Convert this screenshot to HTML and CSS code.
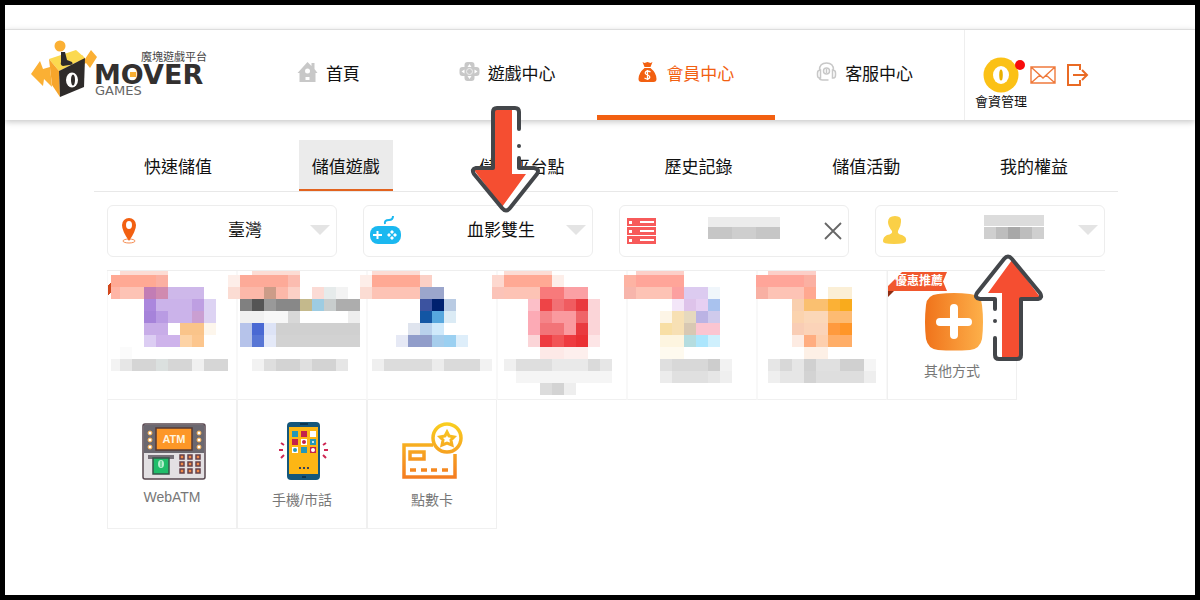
FILE: index.html
```html
<!DOCTYPE html>
<html lang="zh-Hant">
<head>
    <meta charset="UTF-8">
    <meta name="viewport" content="width=device-width, initial-scale=1.0">
    <title>魔塊遊戲平台</title>
    <link rel="stylesheet" href="styles.css">
</head>
<body>
    <header class="header">
        <a class="logo" href="#" aria-label="魔塊遊戲平台 MOVER GAMES">
            <svg width="180" height="60" viewBox="0 0 180 60">
                <path d="M0 34l9-13 3 8 7-2 2 20-8-8-1 7zM47 22l4-7 3 4 6-9 6 7-7 11-4-5-6 4z" fill="#fbb034"/>
                <path d="M18 19l27-9 9 8-26 13z" fill="#fbd94f"/>
                <path d="M18 19l10 12 1 26-8-12z" fill="#f7a52b"/>
                <path d="M28 31l26-13-1 29-24 10z" fill="#2e2b2a"/>
                <ellipse cx="41" cy="40" rx="6" ry="7.500" fill="#fff"/>
                <ellipse cx="42" cy="40" rx="2" ry="5.500" fill="#2e2b2a"/>
                <path d="M30 12h4l2 8 5 2q2 3-3 3l-6 1q-3-1-2-4z" fill="#2e2b2a"/>
                <circle cx="29" cy="6" r="5.500" fill="#fbb034"/>
                <text class="logo-cn" x="110" y="21">魔塊遊戲平台</text>
                <text class="logo-name" x="63" y="44">MOVER</text>
                <path d="M99 32h6v5h-6z" fill="#fbb034"/>
                <text class="logo-sub" x="64" y="55">GAMES</text>
            </svg>
        </a>
        <nav class="nav">
            <a class="nav-item" href="#">
                <svg class="nav-icon" viewBox="0 0 20 20"><path d="M0 11L10 0l4 4V1h3v6l3 4h-2v9H2v-9z" fill="#c8c8c8"/><circle cx="10" cy="9" r="2.500" fill="#fff"/><path d="M8 15h4v3H8z" fill="#fff"/></svg>
                首頁
            </a>
            <a class="nav-item" href="#">
                <svg class="nav-icon" viewBox="0 0 20 20"><path d="M8 0h4q3 0 3 3v2h2q3 0 3 3v3q0 3-3 3h-2v2q0 3-3 3H8q-3 0-3-3v-2H3q-3 0-3-3V8q0-3 3-3h2V3q0-3 3-3z" fill="#c8c8c8"/><path d="M10 2l2 3H8zM10 17l2-3H8zM2 9.500l3-2v4zM18 9.500l-3-2v4z" fill="#fff"/><circle cx="10" cy="9.500" r="3" fill="none" stroke="#eee"/></svg>
                遊戲中心
            </a>
            <a class="nav-item active" href="#">
                <svg class="nav-icon" viewBox="0 0 20 20"><path d="M5 0l2 1 3-1 3 1 2-1-2 5h-6zM7 6h6q6 5 6 11 0 3-3 3H4q-3 0-3-3Q1 11 7 6z" fill="#f26011"/><path d="M13 10q-3-2-5 0-1 2 2 3t2 3q-2 2-5 0M10 8v10" fill="none" stroke="#fff" stroke-width="1.300"/></svg>
                會員中心
            </a>
            <a class="nav-item" href="#">
                <svg class="nav-icon" viewBox="0 0 20 20" fill="none" stroke="#c8c8c8" stroke-width="1.500"><path d="M3 8q0-7 7-7t7 7M4 8v8H3q-2 0-2-3v-2q0-3 3-3zM16 8v8h1q2 0 2-3v-2q0-3-3-3zM3 16q0 2 3 2h6"/><circle cx="10" cy="9" r="3"/><path d="M10 7v4"/></svg>
                客服中心
            </a>
        </nav>
        <div class="user">
            <a class="account" href="#">
                <svg width="36" height="36" viewBox="0 0 36 36"><circle cx="18" cy="18" r="17.500" fill="#fbc116"/><ellipse cx="18" cy="18" rx="8" ry="9" fill="#fff"/><ellipse cx="18" cy="18" rx="1.800" ry="5.500" fill="#e9b000"/></svg>
                <span class="badge"></span>
                <span>會資管理</span>
            </a>
            <a class="user-link" href="#" aria-label="信箱"><svg width="26" height="18" viewBox="0 0 26 18" fill="none" stroke="#ef7a3c" stroke-width="1.400"><path d="M1 1h24v16H1zM1 1l12 11L25 1M1 17l9-8M25 17l-9-8"/></svg></a>
            <a class="user-link" href="#" aria-label="登出"><svg width="22" height="22" viewBox="0 0 22 22" fill="none" stroke="#e96a24" stroke-width="2"><path d="M13 6V1H1v20h12v-5M6 11h14M15 6l5 5-5 5"/></svg></a>
        </div>
    </header>

    <main class="main">
        <nav class="tabs">
            <a class="tab" href="#">快速儲值</a>
            <a class="tab active" href="#">儲值遊戲</a>
            <a class="tab" href="#">儲值平台點</a>
            <a class="tab" href="#">歷史記錄</a>
            <a class="tab" href="#">儲值活動</a>
            <a class="tab" href="#">我的權益</a>
        </nav>

        <div class="pickers">
            <div class="picker">
                <svg class="picker-icon" viewBox="0 0 32 32"><ellipse cx="15" cy="26" rx="6" ry="2" fill="none" stroke="#f58b4f"/><path d="M15 26Q8 16 8 10a7 7 0 0 1 14 0q0 6-7 16z" fill="#f26011"/><ellipse cx="15" cy="10" rx="3" ry="4" fill="#fff"/></svg>
                <select aria-label="地區"><option>臺灣</option></select>
                <span class="caret"></span>
            </div>
            <div class="picker">
                <svg class="picker-icon" viewBox="0 0 32 32"><rect x="0" y="11" width="31" height="18" rx="8" fill="#1bb8f0"/><path d="M15 9q-1-4 4-4 4 0 4-4" fill="none" stroke="#1bb8f0" stroke-width="2"/><path d="M3 20h9M7.500 16v8" stroke="#fff" stroke-width="2"/><path d="M22 15l2 2-2 2-2-2zM22 21l2 2-2 2-2-2zM19 18l2 2-2 2-2-2zM25 18l2 2-2 2-2-2z" fill="#fff"/></svg>
                <select aria-label="遊戲"><option>血影雙生</option></select>
                <span class="caret"></span>
                <svg class="arrow arrow-down" viewBox="0 0 71 107">
                    <path d="M27 2h18q4 0 4 4v56h15q6 1 3 6L40 102q-4 5-8 0L4 68q-3-5 2-6h17V6q0-4 4-4z" fill="#fff"/>
                    <path d="M23 3h19v65h14L32 101 4 64h19z" fill="#f54e31"/>
                    <path d="M49 23V6q0-4-4-4H27q-4 0-4 4v56H6q-5 1-2 6l28 34q4 5 8 0l27-34q3-5-3-6H49V52" fill="none" stroke="#43464a" stroke-width="4" stroke-linecap="round" stroke-linejoin="round"/>
                    <circle cx="49" cy="40" r="2" fill="#43464a"/>
                </svg>
            </div>
            <div class="picker">
                <svg class="picker-icon" viewBox="0 0 32 32"><path d="M1 3h29v8H1zM1 12h29v8H1zM1 21h29v8H1z" fill="#f75a5a"/><path d="M3 6h3v3H3zM3 15h3v3H3zM3 24h3v3H3zM14 6h14v2H14zM14 15h14v2H14zM14 24h14v2H14z" fill="#fff"/></svg>
                <select aria-label="伺服器"><option></option></select>
                <svg class="redacted server" viewBox="0 0 72 22" shape-rendering="crispEdges"><path d="M0 0h72v10H0z" fill="#ececec"/><path d="M0 10h72v12H0z" fill="#c6c6c6"/><path d="M24 10h24v12H24z" fill="#cecece"/></svg>
                <button class="clear" type="button" aria-label="清除"><svg width="18" height="18" viewBox="0 0 18 18"><path d="M1 1l16 16M17 1L1 17" stroke="#666" stroke-width="1.800"/></svg></button>
            </div>
            <div class="picker">
                <svg class="picker-icon" viewBox="0 0 32 32"><path d="M10 16Q6 11 6 7q0-6 7-6t6 6q0 4-3 9-1 3 4 4 5 2 4 6 0 3-12 3T1 26q0-4 4-6 6-1 5-4z" fill="#fad047"/></svg>
                <select aria-label="角色"><option></option></select>
                <svg class="redacted role" viewBox="0 0 60 24" shape-rendering="crispEdges"><path d="M0 0h60v11H0z" fill="#dcdcdc"/><path d="M0 12h60v12H0z" fill="#cfcfcf"/><path d="M12 12h12v12H12zM36 12h12v12H36z" fill="#bdbdbd"/><path d="M24 12h12v12H24z" fill="#a8a8a8"/></svg>
                <span class="caret"></span>
                <svg class="arrow arrow-up" viewBox="0 0 71 107">
                    <path d="M27 2h18q4 0 4 4v56h15q6 1 3 6L40 102q-4 5-8 0L4 68q-3-5 2-6h17V6q0-4 4-4z" fill="#fff"/>
                    <path d="M23 3h19v65h14L32 101 4 64h19z" fill="#f54e31"/>
                    <path d="M49 23V6q0-4-4-4H27q-4 0-4 4v56H6q-5 1-2 6l28 34q4 5 8 0l27-34q3-5-3-6H49V52" fill="none" stroke="#43464a" stroke-width="4" stroke-linecap="round" stroke-linejoin="round"/>
                    <circle cx="49" cy="40" r="2" fill="#43464a"/>
                </svg>
            </div>
        </div>

        <div class="cards">
            <div class="card hidden-card"></div>
            <div class="card hidden-card"></div>
            <div class="card hidden-card"></div>
            <div class="card hidden-card"></div>
            <div class="card hidden-card"></div>
            <div class="card hidden-card"></div>
            <a class="card" href="#">
                <span class="ribbon">優惠推薦</span>
                <svg class="card-icon" viewBox="0 0 68 60">
                    <defs><linearGradient id="plus" x2="1" y2="0"><stop stop-color="#f0731b"/><stop offset="1" stop-color="#fdb04a"/></linearGradient></defs>
                    <path d="M20 2q16-2 32 0 11 1 12 11 2 17 0 34-2 10-12 11-16 1-32 0Q10 57 8 47q-2-17 0-34Q9 3 20 2z" fill="url(#plus)"/>
                    <path d="M36 16v27M22 30h28" stroke="#fff" stroke-width="8" stroke-linecap="round"/>
                </svg>
                <span>其他方式</span>
            </a>
            <a class="card" href="#">
                <svg class="card-icon" viewBox="0 0 68 60">
                    <rect x="5" y="3" width="62" height="55" rx="2" fill="#e3e0e3" stroke="#57474f" stroke-width="1.500"/>
                    <path d="M6 4h60v28H6z" fill="#6b6870"/>
                    <path d="M18 7h36v22H18z" fill="#fd9727" stroke="#573a35" stroke-width="1.500"/>
                    <text class="atm" x="36" y="22" text-anchor="middle">ATM</text>
                    <g fill="#fff" stroke="#f4ac4b"><circle cx="12" cy="12" r="2"/><circle cx="12" cy="19" r="2"/><circle cx="12" cy="26" r="2"/><circle cx="61" cy="12" r="2"/><circle cx="61" cy="19" r="2"/><circle cx="61" cy="26" r="2"/></g>
                    <path d="M10 34h26v4H10z" fill="#777078"/>
                    <path d="M15 37h16v16H15z" fill="#20bd6a" stroke="#37534a" stroke-width="1.500"/>
                    <ellipse cx="23" cy="43" rx="3" ry="4" fill="#b9efd0"/><path d="M23 40v6" stroke="#20bd6a"/>
                    <g fill="#f08a4b" stroke="#65404a" stroke-width="1.500"><path d="M42 34h4v4h-4zM50 34h4v4h-4zM58 34h4v4h-4zM42 41h4v4h-4zM50 41h4v4h-4zM58 41h4v4h-4zM42 48h4v4h-4zM50 48h4v4h-4zM58 48h4v4h-4z"/></g>
                </svg>
                <span>WebATM</span>
            </a>
            <a class="card" href="#">
                <svg class="card-icon" viewBox="0 0 68 60">
                    <rect x="19" y="1" width="33" height="58" rx="4" fill="#15577b"/>
                    <path d="M21 6h29v47H21z" fill="#fdb614"/>
                    <path d="M32 3h8M34 56h4" stroke="#0b3550" stroke-width="2"/>
                    <path d="M24 10h6v6h-6zM42 18h6v6h-6zM33 26h6v6h-6z" fill="#2697b7"/>
                    <path d="M33 10h6v6h-6zM24 18h6v6h-6zM42 26h6v6h-6z" fill="#c4224b"/>
                    <path d="M42 10h6v6h-6zM33 18h6v6h-6zM24 26h6v6h-6z" fill="#fff"/>
                    <g><circle cx="36" cy="21" r="2" fill="#c4224b"/><circle cx="27" cy="29" r="2" fill="#2697b7"/><circle cx="45" cy="29" r="2" fill="#fff"/><circle cx="45" cy="21" r="1" fill="#fff"/></g>
                    <path d="M31 47h2M35 47h2M39 47h2" stroke="#39415a" stroke-width="2"/>
                    <path d="M13 22l3 2M11 29h4M13 37l3-3M58 22l-3 2M60 29h-4M58 37l-3-3" stroke="#cf2854" stroke-width="2"/>
                </svg>
                <span>手機/市話</span>
            </a>
            <a class="card" href="#">
                <svg class="card-icon" viewBox="0 0 68 60">
                    <defs><linearGradient id="gold" gradientUnits="userSpaceOnUse" x1="0" y1="2" x2="0" y2="58"><stop stop-color="#f9cf20"/><stop offset="1" stop-color="#f47b21"/></linearGradient></defs>
                    <g fill="none" stroke="url(#gold)" stroke-width="3.500">
                        <path d="M35 24H6v32h51V33M12 31h14v7H12z"/>
                        <path d="M12 49h6M23 49h6M33 49h6M44 49h6"/>
                        <circle cx="49" cy="17" r="14"/>
                        <path d="M49 11l2 4 5 1-3 3 1 5-5-2-5 2 1-5-3-3 5-1z" stroke-width="3"/>
                    </g>
                </svg>
                <span>點數卡</span>
            </a>
            <svg class="mosaic" width="780" height="136" viewBox="108 271 780 136" shape-rendering="crispEdges" aria-hidden="true">
                <path d="M108 285l4-4v10l-4 5z" fill="#d2481c"/>
            </svg>
        </div>
    </main>
    <script src="mosaic.js"></script>
</body>
</html>
```
FILE: styles.css
```css
* {
    box-sizing: border-box;
}

body {
    margin: 0;
    min-height: 100vh;
    padding-top: 24px;
    border: 5px solid #000;
    background-color: #fff;
    color: #111;
    font-family: "Liberation Sans", "Noto Sans CJK TC", sans-serif;
    font-size: 17px;
}

a {
    color: inherit;
    text-decoration: none;
}

.header {
    display: flex;
    height: 91px;
    border-top: 1px solid #ddd;
    box-shadow: 0 2px 6px rgba(0, 0, 0, 0.22);
}

.logo {
    flex: 0 0 234px;
    padding: 10px 0 0 26px;
}

.logo-cn {
    font-size: 11px;
    fill: #444;
}

.logo-name {
    font-family: "DejaVu Sans", sans-serif;
    font-size: 27px;
    font-weight: bold;
    fill: #33302f;
}

.logo-sub {
    font-family: "DejaVu Sans", sans-serif;
    font-size: 13px;
    fill: #666;
}

.nav {
    display: flex;
    flex: 1;
    margin-right: 10px;
}

.nav-item {
    display: flex;
    flex: 1;
    justify-content: center;
    align-items: center;
    gap: 8px;
    border-bottom: 5px solid transparent;
}

.nav-item.active {
    color: #f26011;
    border-bottom-color: #f26011;
}

.nav-icon {
    width: 21px;
    height: 20px;
    margin-bottom: 2px;
}

.user {
    display: flex;
    flex: 0 0 231px;
    gap: 11px;
    padding: 27px 0 0 10px;
    border-left: 1px solid #eee;
}

.account {
    position: relative;
    display: flex;
    flex-direction: column;
    align-items: center;
    width: 52px;
    margin-right: -8px;
    font-size: 13px;
    line-height: 18px;
}

.badge {
    position: absolute;
    top: 3px;
    right: 2px;
    width: 10px;
    height: 10px;
    border-radius: 50%;
    background-color: #f80b0b;
}

.user-link {
    display: flex;
    align-items: center;
    height: 36px;
}

.main {
    max-width: 1036px;
    margin: 0 auto;
    padding: 20px 0 0 12px;
}

.tabs {
    display: flex;
    justify-content: space-around;
    border-bottom: 1px solid #e8e8e8;
}

.tab {
    padding: 6px 13px 0;
    line-height: 43px;
    border-bottom: 2px solid transparent;
}

.tab.active {
    background-color: #ebebeb;
    border-bottom-color: #e2631f;
}

.pickers {
    display: grid;
    grid-template-columns: repeat(4, 1fr);
    gap: 26px;
    margin: 13px;
}

.picker {
    position: relative;
    display: flex;
    align-items: center;
    height: 52px;
    border: 1px solid #ededed;
    border-radius: 6px;
}

.picker-icon {
    width: 32px;
    height: 32px;
    margin: 0 6px;
}

.picker select {
    flex: 1;
    min-width: 0;
    height: 50px;
    padding: 0 0 2px 2px;
    border: 0;
    background: none;
    color: #111;
    font: inherit;
    text-align-last: center;
    appearance: none;
}

.caret {
    position: absolute;
    top: 19px;
    right: 6px;
    border: 10px solid transparent;
    border-top-color: #e4e4e4;
    border-bottom: 0;
    pointer-events: none;
}

.clear {
    position: absolute;
    top: 16px;
    right: 6px;
    padding: 0;
    border: 0;
    background: none;
    line-height: 0;
    cursor: pointer;
}

.redacted {
    position: absolute;
    pointer-events: none;
}

.server {
    top: 11px;
    left: 88px;
    width: 72px;
}

.role {
    top: 9px;
    left: 108px;
    width: 60px;
}

.arrow {
    position: absolute;
    z-index: 2;
    width: 71px;
    height: 107px;
    pointer-events: none;
}

.arrow-down {
    bottom: 43px;
    left: 106px;
}

.arrow-up {
    top: 48px;
    left: 97px;
    transform: rotate(180deg);
}

.cards {
    position: relative;
    display: flex;
    flex-wrap: wrap;
    margin: 0 13px;
    border-top: 1px solid #eee;
}

.card {
    position: relative;
    display: flex;
    flex-direction: column;
    align-items: center;
    width: 130px;
    height: 129px;
    padding-top: 21px;
    border: 1px solid #f0f0f0;
    border-top: 0;
    color: #777;
    font-size: 14px;
}

.hidden-card {
    border-color: #f8f8f8;
    border-bottom-color: #f0f0f0;
}

.card-icon {
    width: 68px;
    height: 60px;
    margin-bottom: 8px;
}

.ribbon {
    position: absolute;
    z-index: 1;
    top: 1px;
    left: 0;
    width: 59px;
    padding-left: 7px;
    color: #fff;
    font-size: 12px;
    font-weight: bold;
    line-height: 19px;
    white-space: nowrap;
}

.ribbon::before,
.ribbon::after {
    content: "";
    position: absolute;
    z-index: -1;
    left: 0;
}

.ribbon::before {
    top: 0;
    width: 59px;
    height: 19px;
    background-color: #f1572d;
    clip-path: polygon(14px 0, 100% 0, 55px 50%, 100% 100%, 0 100%, 0 14px);
}

.ribbon::after {
    top: 19px;
    border-top: 6px solid #8e2c12;
    border-right: 6px solid transparent;
}

.mosaic {
    position: absolute;
    top: 0;
    left: 1px;
    pointer-events: none;
}

.atm {
    font-size: 11px;
    font-weight: bold;
    fill: #fff3df;
}
```
FILE: mosaic.js
```js
// Each row: top edge, then [left, width in cells, color]
const CELL = 12;
const rows = [
    [271, [120, 4, "#fcdcd4"], [252, 4, "#fcdcd4"], [372, 4, "#fcdcd4"], [504, 4, "#fcdcd4"], [636, 4, "#fccfc8"], [768, 4, "#fccfc8"]],
    [275, [111, 4, "#ffa994"], [156, 1, "#fbb0a2"],
        [228, 1, "#fdeee9"], [240, 4, "#fdaa98"], [288, 1, "#fbbcb0"],
        [360, 1, "#fdeee9"], [372, 4, "#ffa994"], [420, 1, "#fbd0c6"],
        [492, 1, "#fdd8cf"], [504, 4, "#ffa994"], [552, 1, "#fdeee9"],
        [624, 1, "#fdb3a3"], [636, 4, "#ffa599"],
        [756, 4, "#ffa599"], [804, 1, "#fbb0a2"]],
    [287, [111, 1, "#ffb5a5"], [120, 2, "#fdc3b5"], [144, 1, "#c27db5"], [156, 1, "#d08ab0"], [168, 3, "#ceb8ea"],
        [228, 1, "#fbdcd3"], [240, 2, "#fcb8a9"], [264, 1, "#cc9c88"], [276, 1, "#fcb8a9"], [288, 1, "#fbd0c6"], [312, 1, "#fbdbd5"], [324, 1, "#e6ebeb"], [336, 1, "#f3f3f3"],
        [360, 1, "#fbdcd3"], [372, 4, "#fdc3b5"], [420, 2, "#9ba6cc"],
        [492, 1, "#fbc3b8"], [504, 3, "#fdc3b5"], [540, 2, "#f87a7b"], [564, 2, "#fba0a4"],
        [624, 1, "#f7b5ab"], [636, 3, "#fdc3b5"], [672, 1, "#fca0a0"], [684, 2, "#dccbf0"], [708, 1, "#f0f6fb"],
        [756, 1, "#f8b0a3"], [768, 3, "#fdc3b5"], [804, 1, "#ffa890"], [828, 2, "#fbefd6"]],
    [299, [144, 1, "#ab87dd"], [156, 3, "#cbb3ea"], [192, 1, "#be9fe2"], [204, 1, "#ddd3f3"],
        [240, 1, "#808080"], [252, 1, "#555555"], [264, 1, "#999999"], [276, 2, "#888888"], [300, 1, "#c4b98c"], [312, 1, "#9dcce2"], [324, 1, "#c8cdcd"], [336, 2, "#adadad"],
        [420, 1, "#3c53a0"], [432, 1, "#00216f"], [444, 1, "#b9cbe3"],
        [528, 1, "#fcbfc8"], [540, 1, "#ee4447"], [552, 1, "#f27074"], [564, 1, "#f05c60"], [576, 1, "#e93a3f"], [588, 1, "#fbd5d8"],
        [672, 1, "#f3e6f8"], [684, 1, "#dec3ea"], [696, 1, "#e6cff2"], [708, 1, "#a9c2ee"],
        [792, 1, "#f9cfae"], [804, 2, "#fac070"], [828, 1, "#fbb136"], [840, 1, "#f9ab1c"]],
    [311, [144, 1, "#a683da"], [156, 1, "#b99be3"], [168, 2, "#cbb3ea"], [192, 1, "#ca9fd2"], [204, 1, "#ddd3f3"],
        [240, 2, "#f0f0f0"], [264, 2, "#f7f7f7"], [288, 1, "#d8d8d8"], [348, 1, "#eeeeee"],
        [420, 1, "#1356a4"], [432, 1, "#57a7de"], [444, 1, "#dbebf5"],
        [528, 1, "#fcaab5"], [540, 1, "#f58488"], [552, 2, "#fa9a9f"], [576, 1, "#ef6468"], [588, 1, "#fbd5d8"],
        [660, 1, "#fdf5e6"], [672, 1, "#f7e0b4"], [684, 1, "#e6d9be"], [696, 1, "#bbb3e4"], [708, 1, "#cfcaec"],
        [792, 1, "#fbd3ae"], [804, 2, "#fbd7b8"], [828, 2, "#fdbb72"]],
    [323, [144, 2, "#c8ade8"], [180, 2, "#fac48a"], [204, 1, "#fdf6ec"],
        [240, 1, "#b6c3ea"], [252, 1, "#4a69d3"], [264, 1, "#dde3f6"], [276, 7, "#d0d0d0"],
        [408, 1, "#dfe4ee"], [420, 1, "#b9d1ec"], [432, 1, "#cfe9fb"],
        [528, 1, "#fcaab5"], [540, 2, "#f27478"], [564, 1, "#fa9a9f"], [576, 1, "#e93a3f"], [588, 1, "#fbd5d8"],
        [660, 1, "#f8dfa5"], [672, 1, "#f7e0b4"], [684, 1, "#d8c8b3"], [696, 2, "#fbc5d1"],
        [792, 1, "#f9cdb5"], [804, 2, "#fbd3b8"], [828, 1, "#ff9a3e"], [840, 1, "#ff9628"]],
    [335, [144, 1, "#dccdf3"], [156, 2, "#ceb3eb"], [180, 1, "#fdd3a6"], [192, 1, "#fcc68e"],
        [240, 1, "#b6c3ea"], [252, 1, "#5876d5"], [264, 1, "#e4e9f8"], [276, 7, "#d2d2d2"],
        [396, 1, "#e6e9f5"], [408, 2, "#919dca"], [432, 1, "#a6cdec"], [444, 1, "#9bd0f1"], [456, 1, "#deeefa"],
        [528, 1, "#fbd5d8"], [540, 1, "#ee3b40"], [552, 1, "#f25456"], [564, 1, "#ee3b40"], [576, 1, "#ea3034"], [588, 1, "#fde5e6"],
        [660, 2, "#fdf5e0"], [684, 1, "#b5dde0"], [696, 1, "#ace6fd"], [708, 1, "#cff0fd"],
        [792, 1, "#fdebe2"], [804, 1, "#ffad80"], [816, 1, "#fdcfae"], [828, 2, "#ffae68"]],
    [347, [120, 1, "#fbfbfb"], [540, 2, "#fde9e7"], [564, 2, "#fdefed"], [660, 2, "#fefaef"], [804, 2, "#fdf0e6"]],
    [359, [111, 1, "#f3f3f3"], [120, 1, "#e6e6e6"], [132, 2, "#d5d5d5"], [156, 1, "#dbe0df"], [168, 2, "#d6d6d6"], [192, 1, "#f0f0f0"], [204, 2, "#d6d6d6"],
        [252, 1, "#f2f2f2"], [264, 1, "#dedede"], [276, 2, "#d3d3d3"], [300, 1, "#e0e0e0"], [312, 2, "#d3d3d3"], [336, 1, "#e6e6e6"],
        [372, 1, "#efefef"], [384, 4, "#dcdcdc"], [432, 1, "#ececec"], [444, 3, "#dadada"], [480, 1, "#f2f2f2"],
        [504, 1, "#f0f0f0"], [516, 3, "#dedede"], [552, 3, "#e9e9e9"], [588, 1, "#dadada"], [600, 1, "#e6e6e6"],
        [660, 1, "#dfdfdf"], [672, 3, "#d8d8d8"], [708, 1, "#cdcdcd"], [720, 1, "#f2f2f2"],
        [768, 1, "#e6e6e6"], [780, 1, "#d8d8d8"], [792, 1, "#e6e6e6"], [804, 1, "#d0d0d0"], [816, 2, "#e0e0e0"], [840, 2, "#d0d0d0"], [864, 1, "#f5f5f5"]],
    [371, [516, 8, "#f5f5f5"],
        [660, 1, "#ececec"], [672, 3, "#e0e0e0"], [708, 1, "#e6e6e6"], [720, 1, "#efefef"],
        [768, 1, "#efefef"], [780, 2, "#e6e6e6"], [804, 1, "#d3d3d3"], [816, 4, "#dedede"], [864, 1, "#eeeeee"]],
    [383, [540, 1, "#dcdcdc"], [552, 1, "#d3d3d3"], [564, 1, "#eeeeee"]]
];

const mosaic = document.querySelector(".mosaic");
rows.forEach(([top, ...cells]) => {
    cells.forEach(([left, count, color]) => {
        // the first column and the first row are cut by the card edge
        const x = left === 111 ? 108 : left;
        const rect = document.createElementNS("http://www.w3.org/2000/svg", "rect");
        rect.setAttribute("x", left);
        rect.setAttribute("y", top);
        rect.setAttribute("width", x + count * CELL - left);
        rect.setAttribute("height", top === 271 ? 4 : CELL);
        rect.setAttribute("fill", color);
        mosaic.appendChild(rect);
    });
});
```
